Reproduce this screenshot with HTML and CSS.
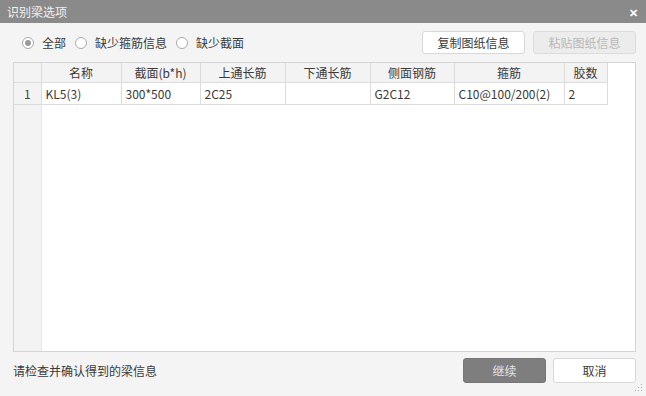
FILE: index.html
```html
<!DOCTYPE html>
<html lang="zh-CN">
<head>
    <meta charset="UTF-8">
    <title>识别梁选项</title>
    <link rel="stylesheet" href="styles.css">
</head>
<body>
    <div class="dialog">
        <div class="titlebar">
            <span class="title">识别梁选项</span>
            <span class="close">&#x2715;</span>
        </div>
        <div class="toolbar">
            <label class="radio checked"><span class="dot"></span>全部</label>
            <label class="radio"><span class="dot"></span>缺少箍筋信息</label>
            <label class="radio"><span class="dot"></span>缺少截面</label>
            <div class="spacer"></div>
            <button class="btn">复制图纸信息</button>
            <button class="btn disabled">粘贴图纸信息</button>
        </div>
        <div class="grid-wrap">
            <table class="grid">
                <thead>
                    <tr>
                        <th class="num"></th>
                        <th class="c1">名称</th>
                        <th class="c2">截面(b*h)</th>
                        <th class="c3">上通长筋</th>
                        <th class="c4">下通长筋</th>
                        <th class="c5">侧面钢筋</th>
                        <th class="c6">箍筋</th>
                        <th class="c7">胶数</th>
                    </tr>
                </thead>
                <tbody>
                    <tr>
                        <td class="num">1</td>
                        <td>KL5(3)</td>
                        <td>300*500</td>
                        <td>2C25</td>
                        <td></td>
                        <td>G2C12</td>
                        <td>C10@100/200(2)</td>
                        <td>2</td>
                    </tr>
                </tbody>
            </table>
        </div>
        <div class="footer">
            <span class="hint">请检查并确认得到的梁信息</span>
            <div class="spacer"></div>
            <button class="btn primary">继续</button>
            <button class="btn">取消</button>
        </div>
        <svg class="grip" width="8" height="8" viewBox="0 0 8 8">
            <rect x="6" y="0" width="1" height="1" fill="#aaa"/>
            <rect x="3" y="3" width="1" height="1" fill="#aaa"/>
            <rect x="6" y="3" width="1" height="1" fill="#aaa"/>
            <rect x="0" y="6" width="1" height="1" fill="#aaa"/>
            <rect x="3" y="6" width="1" height="1" fill="#aaa"/>
            <rect x="6" y="6" width="1" height="1" fill="#aaa"/>
        </svg>
    </div>
</body>
</html>
```

FILE: styles.css
```css
* {
    margin: 0;
    padding: 0;
    box-sizing: border-box;
}
body {
    font-family: "Noto Sans CJK SC", "Noto Sans", sans-serif;
    font-size: 12px;
    color: #3a3a3a;
    background: #f4f4f4;
}
.dialog {
    position: relative;
    width: 646px;
    height: 396px;
    display: flex;
    flex-direction: column;
    background: #f4f4f4;
}
.titlebar {
    height: 23px;
    background: #8a8a8a;
    display: flex;
    align-items: center;
    padding: 0 8px 0 7px;
    color: #f0f0f0;
}
.title {
    flex: 1;
    font-size: 12px;
}
.close {
    font-size: 11px;
    font-weight: bold;
    color: #fff;
}
.toolbar {
    height: 39px;
    display: flex;
    align-items: center;
    padding: 0 10px 0 22px;
}
.radio {
    display: flex;
    align-items: center;
    margin-right: 9px;
}
.dot {
    width: 12px;
    height: 12px;
    border: 1px solid #aaa;
    border-radius: 50%;
    background: #fff;
    margin-right: 8px;
    display: flex;
    align-items: center;
    justify-content: center;
}
.checked .dot::after {
    content: "";
    width: 6px;
    height: 6px;
    border-radius: 50%;
    background: #999;
}
.spacer {
    flex: 1;
}
.btn {
    font-family: inherit;
    font-size: 12px;
    color: #3a3a3a;
    height: 23px;
    width: 103px;
    border: 1px solid #d8d8d8;
    border-radius: 3px;
    background: #fff;
    margin-left: 8px;
}
.btn.disabled {
    color: #b8b8b8;
    background: #ececec;
    border-color: #dcdcdc;
}
.footer .btn {
    height: 25px;
    width: 83px;
    margin-left: 7px;
}
.btn.primary {
    background: #7e7e7e;
    border-color: #767676;
    color: #e2e2e2;
}
.grid-wrap {
    height: 290px;
    margin: 0 10px 0 13px;
    border: 1px solid #d4d4d4;
    background: linear-gradient(to right, #f3f3f3 27px, #e8e8e8 27px, #e8e8e8 28px, #fff 28px);
}
.grid {
    border-collapse: collapse;
    table-layout: fixed;
}
.grid th,
.grid td {
    border: 1px solid #dcdcdc;
    white-space: nowrap;
    font-weight: normal;
}
.grid th {
    background: #f3f3f3;
    height: 19px;
    text-align: center;
}
.grid td {
    height: 22px;
    padding: 0 4px;
    background: #fff;
}
.grid tr > :first-child {
    border-left: none;
}
.grid thead th {
    border-top: none;
}
.grid td.num {
    background: #f3f3f3;
    text-align: center;
    color: #444;
}
.num { width: 27px; }
.c1 { width: 80px; }
.c2 { width: 79px; }
.c3 { width: 85px; }
.c4 { width: 85px; }
.c5 { width: 84px; }
.c6 { width: 110px; }
.c7 { width: 43px; }
.footer {
    flex: 1;
    display: flex;
    align-items: center;
    padding: 0 10px 7px 13px;
}
.grip {
    position: absolute;
    right: 3px;
    bottom: 4px;
}
```
